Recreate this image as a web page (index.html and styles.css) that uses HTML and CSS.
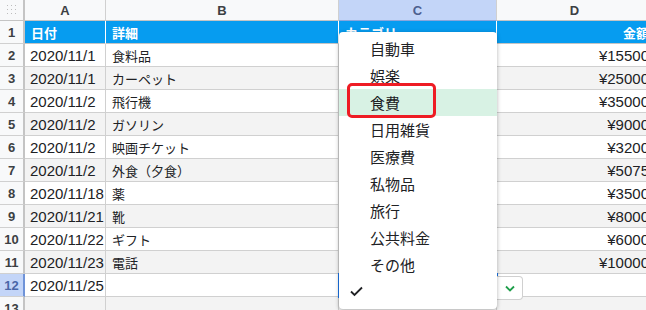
FILE: index.html
```html
<!DOCTYPE html>
<html lang="ja">
<head>
    <meta charset="UTF-8">
    <title>家計簿</title>
    <link rel="stylesheet" href="styles.css">
</head>
<body>
    <div class="sheet">
        <div class="grid">
            <div class="corner">
                <svg width="10" height="10" viewBox="0 0 10 10">
                    <g fill="#bdbdbd">
                        <rect x="0" y="0" width="1" height="1"/><rect x="4" y="0" width="1" height="1"/><rect x="8" y="0" width="1" height="1"/>
                        <rect x="0" y="4" width="1" height="1"/><rect x="4" y="4" width="1" height="1"/><rect x="8" y="4" width="1" height="1"/>
                        <rect x="0" y="8" width="1" height="1"/><rect x="4" y="8" width="1" height="1"/><rect x="8" y="8" width="1" height="1"/>
                    </g>
                </svg>
            </div>
            <div class="colhead">A</div>
            <div class="colhead">B</div>
            <div class="colhead selected">C</div>
            <div class="colhead">D</div>

            <div class="rowhead">1</div>
            <div class="cell title"><span class="jp">日付</span></div>
            <div class="cell title"><span class="jp">詳細</span></div>
            <div class="cell title"><span class="jp">カテゴリ</span></div>
            <div class="cell title num"><span class="jp">金額</span></div>

            <div class="rowhead">2</div>
            <div class="cell">2020/11/1</div>
            <div class="cell"><span class="jp">食料品</span></div>
            <div class="cell"></div>
            <div class="cell num">¥15500</div>

            <div class="rowhead">3</div>
            <div class="cell band">2020/11/1</div>
            <div class="cell band"><span class="jp">カーペット</span></div>
            <div class="cell band"></div>
            <div class="cell band num">¥25000</div>

            <div class="rowhead">4</div>
            <div class="cell">2020/11/2</div>
            <div class="cell"><span class="jp">飛行機</span></div>
            <div class="cell"></div>
            <div class="cell num">¥35000</div>

            <div class="rowhead">5</div>
            <div class="cell band">2020/11/2</div>
            <div class="cell band"><span class="jp">ガソリン</span></div>
            <div class="cell band"></div>
            <div class="cell band num">¥9000</div>

            <div class="rowhead">6</div>
            <div class="cell">2020/11/2</div>
            <div class="cell"><span class="jp">映画チケット</span></div>
            <div class="cell"></div>
            <div class="cell num">¥3200</div>

            <div class="rowhead">7</div>
            <div class="cell band">2020/11/2</div>
            <div class="cell band"><span class="jp">外食（夕食）</span></div>
            <div class="cell band"></div>
            <div class="cell band num">¥5075</div>

            <div class="rowhead">8</div>
            <div class="cell">2020/11/18</div>
            <div class="cell"><span class="jp">薬</span></div>
            <div class="cell"></div>
            <div class="cell num">¥3500</div>

            <div class="rowhead">9</div>
            <div class="cell band">2020/11/21</div>
            <div class="cell band"><span class="jp">靴</span></div>
            <div class="cell band"></div>
            <div class="cell band num">¥8000</div>

            <div class="rowhead">10</div>
            <div class="cell">2020/11/22</div>
            <div class="cell"><span class="jp">ギフト</span></div>
            <div class="cell"></div>
            <div class="cell num">¥6000</div>

            <div class="rowhead">11</div>
            <div class="cell band">2020/11/23</div>
            <div class="cell band"><span class="jp">電話</span></div>
            <div class="cell band"></div>
            <div class="cell band num">¥10000</div>

            <div class="rowhead selected">12</div>
            <div class="cell">2020/11/25</div>
            <div class="cell"></div>
            <div class="cell active"></div>
            <div class="cell num"></div>

            <div class="rowhead">13</div>
            <div class="cell band"></div>
            <div class="cell band"></div>
            <div class="cell band"></div>
            <div class="cell band"></div>
        </div>

        <!-- カテゴリ選択のプルダウン -->
        <div class="menu">
            <div class="item">自動車</div>
            <div class="item">娯楽</div>
            <div class="item hover">食費</div>
            <div class="item">日用雑貨</div>
            <div class="item">医療費</div>
            <div class="item">私物品</div>
            <div class="item">旅行</div>
            <div class="item">公共料金</div>
            <div class="item">その他</div>
            <div class="item">
                <svg class="check" width="13" height="11" viewBox="0 0 13 11">
                    <polyline points="1,5.5 4.5,9 12,1.5" fill="none" stroke="#202124" stroke-width="1.8"/>
                </svg>
            </div>
            <div class="mark"></div>
        </div>

        <div class="drop-btn">
            <svg width="10" height="7" viewBox="0 0 10 7">
                <polyline points="1,1.5 5,5.5 9,1.5" fill="none" stroke="#1e9e4a" stroke-width="1.8"/>
            </svg>
        </div>
    </div>
</body>
</html>
```

FILE: styles.css
```css
body {
    margin: 0;
    overflow: hidden;
    background: #fff;
    font-family: 'Liberation Sans', 'Noto Sans CJK JP', sans-serif;
    color: #202124;
}

.sheet {
    position: relative;
    width: 646px;
    height: 310px;
    overflow: hidden;
}

.grid {
    display: grid;
    grid-template-columns: 25px 81px 233px 158px 156px;
    grid-template-rows: 21px repeat(13, 23px);
}

.grid > div {
    box-sizing: border-box;
    white-space: nowrap;
    overflow: hidden;
}

.corner {
    background: #f8f9fa;
    border-right: 2px solid #c4c4c4;
    border-bottom: 1px solid #c4c4c4;
    display: flex;
    align-items: center;
    justify-content: center;
}

.colhead {
    background: #f8f9fa;
    border-right: 1px solid #d0d0d0;
    border-bottom: 1px solid #c4c4c4;
    font-size: 13px;
    font-weight: bold;
    color: #3c4043;
    display: flex;
    align-items: center;
    justify-content: center;
}

.colhead.selected {
    background: #c3d5f8;
    color: #4d5f8e;
    border-bottom-color: #8aa6dc;
}

.rowhead {
    background: #f8f9fa;
    border-right: 2px solid #c4c4c4;
    border-bottom: 1px solid #d0d0d0;
    font-size: 13px;
    font-weight: bold;
    color: #3c4043;
    display: flex;
    align-items: center;
    justify-content: center;
}

.rowhead.selected {
    background: #c3d5f8;
    color: #4a66a8;
    border-right-color: #6f93d8;
}

.cell {
    background: #fff;
    border-right: 1px solid #d0d0d0;
    border-bottom: 1px solid #d0d0d0;
    font-size: 15px;
    padding: 0 4px 0 5px;
    display: flex;
    align-items: center;
}

.cell.band {
    background: #f3f3f3;
}

.cell.num {
    justify-content: flex-end;
    padding-right: 3px;
}

.cell.title {
    background: #069cf0;
    color: #fff;
    font-weight: bold;
    border-right-color: #fff;
    border-bottom-color: #c4c4c4;
}

.jp {
    font-size: 13px;
    margin-left: 1px;
}

.cell.active {
    position: relative;
    z-index: 1;
    outline: 2px solid #1a73e8;
    outline-offset: -1px;
}

.menu {
    position: absolute;
    left: 339px;
    top: 32px;
    width: 158px;
    padding: 3px 0 4px;
    background: #fff;
    border-radius: 4px;
    box-shadow: 0 1px 4px rgba(0, 0, 0, 0.3);
    z-index: 5;
    box-sizing: border-box;
}

.item {
    height: 27px;
    padding-left: 31px;
    display: flex;
    align-items: center;
    font-size: 15px;
    color: #202124;
    position: relative;
}

.item.hover {
    background: #d8f2e4;
}

.check {
    position: absolute;
    left: 11px;
    top: 8px;
}

.mark {
    position: absolute;
    left: 8px;
    top: 51px;
    width: 89px;
    height: 35px;
    box-sizing: border-box;
    border: 3px solid #ee1c24;
    border-radius: 5px;
}

.drop-btn {
    position: absolute;
    left: 497px;
    top: 276px;
    width: 26px;
    height: 24px;
    box-sizing: border-box;
    background: #fff;
    border: 1px solid #d0d0d0;
    border-left: none;
    border-radius: 0 4px 4px 0;
    display: flex;
    align-items: center;
    justify-content: center;
    z-index: 4;
}
```
